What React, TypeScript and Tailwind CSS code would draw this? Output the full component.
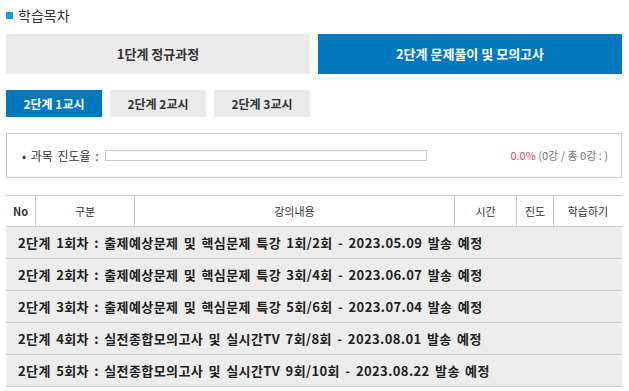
const rows = [
  "2단계 1회차 : 출제예상문제 및 핵심문제 특강 1회/2회 - 2023.05.09 발송 예정",
  "2단계 2회차 : 출제예상문제 및 핵심문제 특강 3회/4회 - 2023.06.07 발송 예정",
  "2단계 3회차 : 출제예상문제 및 핵심문제 특강 5회/6회 - 2023.07.04 발송 예정",
  "2단계 4회차 : 실전종합모의고사 및 실시간TV 7회/8회 - 2023.08.01 발송 예정",
  "2단계 5회차 : 실전종합모의고사 및 실시간TV 9회/10회 - 2023.08.22 발송 예정",
];

export default function App() {
  return (
    <div className="w-[629px] h-[391px] bg-white overflow-hidden text-[#333] [font-family:'Noto_Sans_CJK_KR','Noto_Sans',sans-serif]">
      <div className="ml-[6px] w-[616px]">
        {/* title */}
        <div className="h-[34px] flex items-center pb-[4px]">
          <span className="w-[7px] h-[7px] bg-[#1a9ad6] mr-[5px]" />
          <span className="text-[14px] leading-none text-[#333]">학습목차</span>
        </div>

        {/* step tabs */}
        <div className="grid grid-cols-2 gap-[8px] h-[40px]">
          <div className="bg-[#eaeaea] flex items-center justify-center text-[13px] font-bold text-[#333]">
            1단계 정규과정
          </div>
          <div className="bg-[#0078be] flex items-center justify-center text-[13px] font-bold text-white">
            2단계 문제풀이 및 모의고사
          </div>
        </div>

        {/* period tabs */}
        <div className="flex gap-[8px] mt-[16px] h-[27px]">
          <div className="w-[96px] bg-[#0078be] text-white flex items-center justify-center text-[12px] font-bold">
            2단계 1교시
          </div>
          <div className="w-[96px] bg-[#eaeaea] flex items-center justify-center text-[12px] font-bold">
            2단계 2교시
          </div>
          <div className="w-[96px] bg-[#eaeaea] flex items-center justify-center text-[12px] font-bold">
            2단계 3교시
          </div>
        </div>

        {/* progress */}
        <div className="mt-[16px] h-[45px] border border-[#cccccc] flex items-center pl-[15px] pr-[13px]">
          <span className="text-[12px] text-[#333] [word-spacing:2px]">• 과목 진도율 :</span>
          <div className="ml-[6px] w-[322px] h-[11px] border border-[#cccccc]" />
          <span className="ml-auto text-[11px] text-[#777]">
            <span className="text-[#e8465a]">0.0%</span> (0강 / 총 0강 : )
          </span>
        </div>

        {/* table */}
        <div className="mt-[17px] border-t border-[#cccccc]">
          <div className="flex h-[31px] border-b border-[#cccccc] text-[11px] text-[#333]">
            <div className="w-[30px] flex items-center justify-center font-bold border-r border-[#cccccc]">No</div>
            <div className="w-[99px] flex items-center justify-center border-r border-[#cccccc]">구분</div>
            <div className="w-[320px] flex items-center justify-center border-r border-[#cccccc]">강의내용</div>
            <div className="w-[62px] flex items-center justify-center border-r border-[#cccccc]">시간</div>
            <div className="w-[37px] flex items-center justify-center border-r border-[#cccccc]">진도</div>
            <div className="flex-1 flex items-center justify-center">학습하기</div>
          </div>
          {rows.map((r) => (
            <div
              key={r}
              className="h-[32px] bg-[#ececec] border-b border-[#cccccc] flex items-center pl-[12px] text-[13px] font-bold text-[#222] tracking-[0.4px] [word-spacing:2px]"
            >
              {r}
            </div>
          ))}
        </div>
      </div>
    </div>
  );
}
